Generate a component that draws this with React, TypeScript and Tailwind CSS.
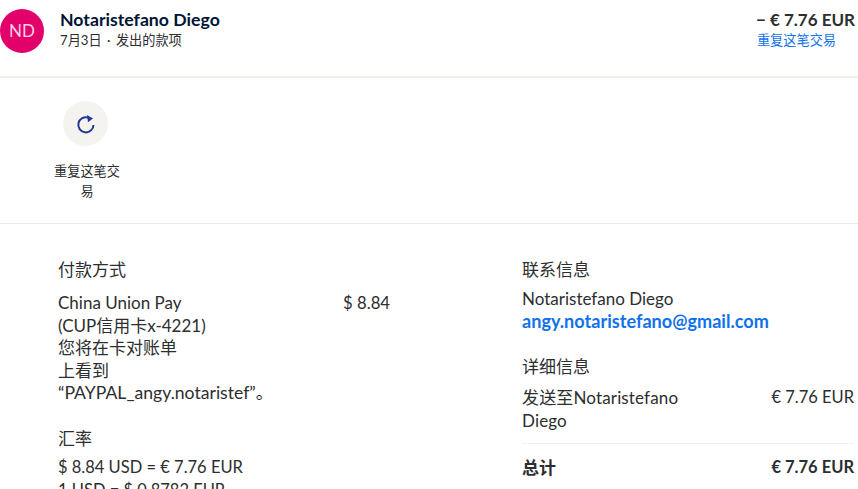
import React from "react";

export default function App() {
  return (
    <div className="h-[489px] w-[858px] overflow-hidden bg-white font-['Lato','Noto_Sans_CJK_SC',sans-serif] text-[#2c2e2f]">
      <header className="flex h-[78px] items-start justify-between border-b-2 border-[#f1f0ea] pt-[9px] pr-[3px]">
        <div className="flex">
          <div className="flex h-[44px] w-[44px] items-center justify-center rounded-full bg-[#e2006a] text-[17px] text-[#fbd0e4]">ND</div>
          <div className="ml-4">
            <div className="text-[17.7px] leading-[22px] font-bold text-[#001435]">Notaristefano Diego</div>
            <div className="text-[13.2px] leading-[19px] text-[#2c2e2f]">7月3日<span className="mx-[2px]"> · </span>发出的款项</div>
          </div>
        </div>
        <div className="flex flex-col items-start whitespace-nowrap">
          <div className="text-[17px] leading-[22px] font-bold">− € 7.76 EUR</div>
          <a className="ml-[1px] text-[13.2px] leading-[19px] text-[#1072eb]">重复这笔交易</a>
        </div>
      </header>
      <section className="h-[146px] border-b border-[#ebebe6] pt-[23px] pl-[53px]">
        <div className="flex w-[68px] flex-col items-center">
          <div className="-ml-[3px] flex h-[45px] w-[45px] items-center justify-center rounded-full bg-[#f5f3ef]">
            <svg width="20" height="20" viewBox="0 0 20 20" fill="none" stroke="#1f3a93" strokeWidth="2">
              <path d="M12.4 3.6 A7.6 7.6 0 1 0 17.5 11" />
              <path d="M11 1 L17 4.6 L12 8.2 Z" fill="#1f3a93" stroke="none" />
            </svg>
          </div>
          <div className="mt-[15px] text-center text-[13.2px] leading-[20px]">重复这笔交易</div>
        </div>
      </section>
      <main className="flex pt-[34px] pl-[58px] pr-[4px]">
        <div className="w-[332px]">
          <h3 className="text-[17px] leading-[24px]">付款方式</h3>
          <div className="mt-[10px] flex justify-between text-[17px] leading-[22.6px]">
            <div className="w-[240px]">
              China Union Pay<br />(CUP信用卡x-4221)<br />您将在卡对账单<br />上看到<br /><span className="text-[17.6px]">“PAYPAL_angy.notaristef”。</span>
            </div>
            <div className="text-[16.7px]">$ 8.84</div>
          </div>
          <h3 className="mt-[22px] text-[17px] leading-[24px]">汇率</h3>
          <div className="mt-[5px] text-[16.5px] leading-[22.6px]">
            $ 8.84 USD = € 7.76 EUR<br />1 USD = $ 0.8782 EUR
          </div>
        </div>
        <div className="ml-[132px] w-[332px]">
          <h3 className="text-[17px] leading-[24px]">联系信息</h3>
          <div className="mt-[5px] text-[17px] leading-[23px]">Notaristefano Diego</div>
          <a className="block text-[18.1px] leading-[23px] font-bold text-[#1072eb]">angy.notaristefano@gmail.com</a>
          <h3 className="mt-[22px] text-[17px] leading-[24px]">详细信息</h3>
          <div className="mt-[7px] flex justify-between border-b border-[#f1f0ea] pb-[11px] text-[17px] leading-[23px]">
            <div className="w-[180px] tracking-[0.15px]">发送至Notaristefano Diego</div>
            <div className="text-[16.5px] tracking-normal">€ 7.76 EUR</div>
          </div>
          <div className="mt-[12px] flex justify-between text-[17px] leading-[23px] font-bold">
            <div>总计</div>
            <div className="text-[16.5px]">€ 7.76 EUR</div>
          </div>
        </div>
      </main>
    </div>
  );
}
